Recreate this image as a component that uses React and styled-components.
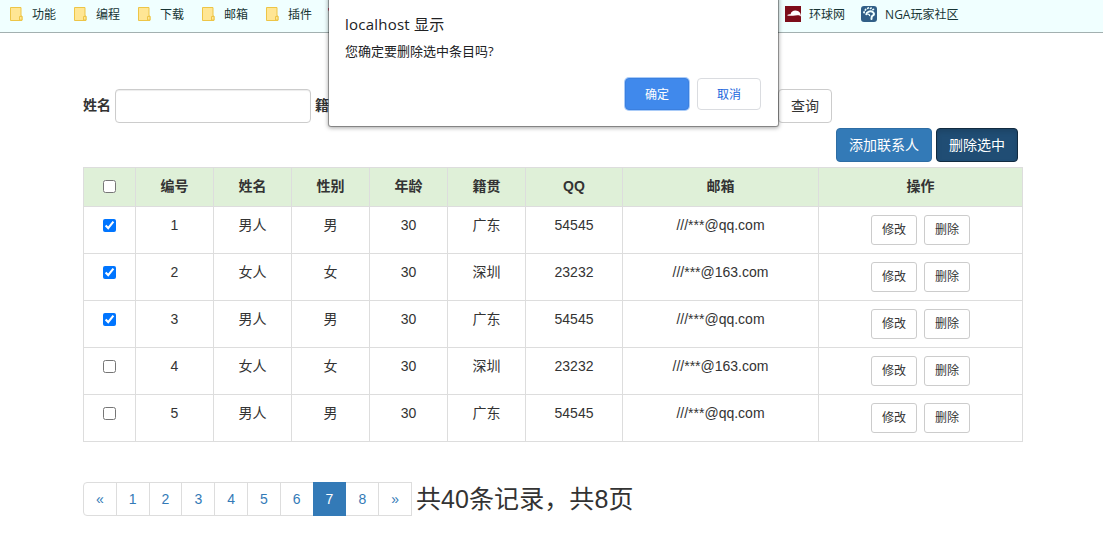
import React, { useState } from "react";
import styled, { createGlobalStyle, css } from "styled-components";

const GlobalStyle = createGlobalStyle`
  * { box-sizing: border-box; }
  body {
    margin: 0;
    background: #fff;
    color: #333;
    font: 14px/20px "Liberation Sans", "Noto Sans CJK SC", sans-serif;
    overflow: hidden;
  }
  button, input { font-family: inherit; }
`;

const Page = styled.div`
  position: relative;
  height: 540px;
`;

const BookmarkBar = styled.nav`
  display: flex;
  align-items: flex-start;
  gap: 16px;
  height: 33px;
  padding: 6px 8px 0;
  background: #f0ffff;
  border-bottom: 1px solid #a3b0b0;
`;

const Bookmark = styled.a`
  display: flex;
  align-items: flex-start;
  gap: 8px;
  height: 18px;
  color: #173434;
  font: 12px/18px "Open Sans", "Noto Sans CJK SC", sans-serif;
  white-space: nowrap;
  svg { display: block; flex: none; }
`;

const SiteBookmarks = styled.div`
  display: flex;
  gap: 16px;
  margin-left: 425px;
`;

const Container = styled.main`
  width: 940px;
  margin: 56px 0 0 83px;
`;

const SearchForm = styled.form`
  display: flex;
  align-items: center;
  gap: 4px;
  height: 34px;
`;

const Label = styled.label`
  font-weight: 700;
  line-height: 20px;
  margin-top: -2px;
  white-space: nowrap;
`;

const TextInput = styled.input`
  width: 196px;
  height: 34px;
  padding: 6px 12px;
  border: 1px solid #ccc;
  border-radius: 4px;
  box-shadow: inset 0 1px 1px rgba(0, 0, 0, 0.075);
`;

const Button = styled.button`
  height: 34px;
  padding: 6px 12px;
  border: 1px solid #ccc;
  border-radius: 4px;
  background: #fff;
  color: #333;
  font-size: 14px;
  line-height: 20px;
  white-space: nowrap;
  ${(p) => p.$kind === "primary" && css`
    color: #fff;
    background: #337ab7;
    border-color: #2e6da4;
  `}
  ${(p) => p.$kind === "pressed" && css`
    color: #fff;
    background: #204d74;
    border-color: #122b40;
    box-shadow: inset 0 3px 5px rgba(0, 0, 0, 0.125);
  `}
  ${(p) => p.$small && css`
    height: 30px;
    padding: 5px 10px;
    border-radius: 3px;
    font-size: 12px;
    line-height: 18px;
  `}
`;

const QueryButton = styled(Button)`
  margin-left: auto;
  margin-right: 191px;
`;

const Toolbar = styled.div`
  display: flex;
  justify-content: flex-end;
  gap: 4px;
  padding: 5px 5px;
`;

const Table = styled.table`
  width: 940px;
  table-layout: fixed;
  border-collapse: collapse;
  text-align: center;
`;

const HeadRow = styled.tr`
  height: 39px;
  background: #dff0d8;
`;

const Row = styled.tr`
  height: 47px;
`;

const cell = css`
  padding: 8px 0 0;
  border: 1px solid #ddd;
  vertical-align: top;
  line-height: 20px;
`;
const Th = styled.th`${cell}`;
const Td = styled.td`${cell}`;

const Check = styled.input.attrs({ type: "checkbox" })`
  display: block;
  width: 13px;
  height: 13px;
  margin: 4px auto 0;
`;

const Actions = styled.div`
  display: flex;
  justify-content: center;
  gap: 7px;
`;

const Footer = styled.div`
  display: flex;
  align-items: center;
  gap: 4px;
  margin-top: 40px;
`;

const Pagination = styled.ul`
  display: flex;
  margin: 0;
  padding: 0;
  list-style: none;
`;

const PageLink = styled.li`
  height: 34px;
  margin-left: -1px;
  padding: 6px 12px;
  border: 1px solid ${(p) => (p.$active ? "#337ab7" : "#ddd")};
  background: ${(p) => (p.$active ? "#337ab7" : "#fff")};
  color: ${(p) => (p.$active ? "#fff" : "#337ab7")};
  position: relative;
  z-index: ${(p) => (p.$active ? 1 : 0)};
  &:first-child {
    margin-left: 0;
    border-radius: 4px 0 0 4px;
  }
`;

const Summary = styled.span`
  font-size: 25px;
  line-height: 34px;
  letter-spacing: 0.08px;
  white-space: nowrap;
`;

const Dialog = styled.section`
  position: absolute;
  z-index: 5;
  top: -4px;
  left: 329px;
  width: 449px;
  height: 130px;
  padding: 18px 17px 16px 16px;
  display: flex;
  flex-direction: column;
  background: #fff;
  border-radius: 2px;
  box-shadow: 0 0 0 1px rgba(0, 0, 0, 0.3), 0 1px 4px 1px rgba(0, 0, 0, 0.35);
  color: #202124;
  font-family: "Open Sans", "Noto Sans CJK SC", sans-serif;
`;

const DialogTitle = styled.h1`
  margin: 0;
  font-size: 15px;
  font-weight: 400;
  line-height: 20px;
  letter-spacing: 0.22px;
`;

const DialogText = styled.p`
  margin: 8px 0 0;
  font-size: 13px;
  line-height: 18px;
`;

const DialogActions = styled.div`
  display: flex;
  justify-content: flex-end;
  gap: 8px;
  margin-top: auto;
`;

const DialogButton = styled.button`
  width: 64px;
  height: 32px;
  padding: 0;
  border: 1px solid ${(p) => (p.$primary ? "#3b80e0" : "#dadce0")};
  border-radius: 4px;
  background: ${(p) => (p.$primary ? "#4089ec" : "#fff")};
  color: ${(p) => (p.$primary ? "#fff" : "#1a66dc")};
  box-shadow: ${(p) => (p.$primary ? "0 0 0 1px #a9cbf8" : "none")};
  font-size: 12px;
`;

const FolderIcon = () => (
  <svg width="16" height="16" viewBox="0 0 16 16">
    <path d="M2.5 1.5h10.5v8.5h1v4.5h-11.5z" fill="#ffe694" stroke="#edc547" />
    <path d="M11.500 14V10.500h2.500v3.500z" fill="#ffe694" stroke="#edc547" />
  </svg>
);

const HeartIcon = () => (
  <svg width="16" height="16" viewBox="0 0 16 16">
    <path d="M0 2h16v2L8 14 0 4z" fill="#e9698b" />
  </svg>
);

const GlobeNewsIcon = () => (
  <svg width="16" height="16" viewBox="0 0 16 16">
    <path d="M0 0h16v16H0z" fill="#7d0d1a" />
    <path d="M2 9.300c1-.8 2.200-.9 3.500-1 .7-2.600 2.400-3.800 4.800-3.800 2.300 0 4.100 1 5.200 3.300l.5 2.800c-1-1.100-2.300-1.600-3.700-1.400-1.700.3-3.600.7-5.200.5-1.900.3-3.700.2-5.100-.4z" fill="#fff" />
  </svg>
);

const PawIcon = () => (
  <svg width="16" height="16" viewBox="0 0 16 16">
    <rect width="16" height="16" rx="3" fill="#315f87" />
    <g fill="#f0ffff">
      <ellipse cx="3.100" cy="6.200" rx=".9" ry="1.200" />
      <ellipse cx="4.500" cy="3.700" rx=".9" ry="1.200" transform="rotate(30 4.500 3.700)" />
      <ellipse cx="7" cy="2.100" rx=".9" ry="1.300" transform="rotate(50 7 2.100)" />
      <ellipse cx="9.800" cy="2.200" rx=".8" ry="1.300" transform="rotate(60 9.800 2.200)" />
      <ellipse cx="12.200" cy="3.500" rx=".8" ry="1.200" transform="rotate(65 12.200 3.500)" />
    </g>
    <path
      d="M5.300 8.200C5.400 6 9.500 4.300 12 6.200c1.700 1.400 1 2.700-.4 3.500-1.300.8-1 2.100-1.100 3.300"
      fill="none"
      stroke="#f0ffff"
      strokeWidth="2"
      strokeLinecap="round"
    />
    <path d="M6.300 8.300c1.500-.4 2.500.3 2.300 1.800" fill="none" stroke="#f0ffff" strokeWidth="1.300" />
  </svg>
);

const folders = ["功能", "编程", "下载", "邮箱", "插件"];
const widths = [52, 78, 78, 78, 78, 78, 97, 196, 204];
const headings = ["编号", "姓名", "性别", "年龄", "籍贯", "QQ", "邮箱", "操作"];
const contacts = [
  [1, "男人", "男", 30, "广东", "54545", "///***@qq.com"],
  [2, "女人", "女", 30, "深圳", "23232", "///***@163.com"],
  [3, "男人", "男", 30, "广东", "54545", "///***@qq.com"],
  [4, "女人", "女", 30, "深圳", "23232", "///***@163.com"],
  [5, "男人", "男", 30, "广东", "54545", "///***@qq.com"],
];
const pages = ["«", "1", "2", "3", "4", "5", "6", "7", "8", "»"];

export default function App() {
  const [selected, setSelected] = useState([1, 2, 3]);
  const toggle = (id) =>
    setSelected((s) => (s.includes(id) ? s.filter((x) => x !== id) : [...s, id]));
  const all = selected.length === contacts.length;

  return (
    <Page>
      <GlobalStyle />
      <BookmarkBar>
        {folders.map((name) => (
          <Bookmark key={name}><FolderIcon />{name}</Bookmark>
        ))}
        <Bookmark><HeartIcon /></Bookmark>
        <SiteBookmarks>
          <Bookmark><GlobeNewsIcon />环球网</Bookmark>
          <Bookmark><PawIcon />NGA玩家社区</Bookmark>
        </SiteBookmarks>
      </BookmarkBar>

      <Container>
        <SearchForm>
          <Label htmlFor="name">姓名</Label>
          <TextInput id="name" />
          <Label>籍贯</Label>
          <QueryButton type="button">查询</QueryButton>
        </SearchForm>
        <Toolbar>
          <Button $kind="primary">添加联系人</Button>
          <Button $kind="pressed">删除选中</Button>
        </Toolbar>

        <Table>
          <colgroup>
            {widths.map((w, i) => <col key={i} width={w} />)}
          </colgroup>
          <thead>
            <HeadRow>
              <Th>
                <Check
                  checked={all}
                  onChange={() => setSelected(all ? [] : contacts.map((c) => c[0]))}
                />
              </Th>
              {headings.map((h) => <Th key={h}>{h}</Th>)}
            </HeadRow>
          </thead>
          <tbody>
            {contacts.map((c) => (
              <Row key={c[0]}>
                <Td><Check checked={selected.includes(c[0])} onChange={() => toggle(c[0])} /></Td>
                {c.map((value, i) => <Td key={i}>{value}</Td>)}
                <Td>
                  <Actions>
                    <Button $small>修改</Button>
                    <Button $small>删除</Button>
                  </Actions>
                </Td>
              </Row>
            ))}
          </tbody>
        </Table>

        <Footer>
          <Pagination>
            {pages.map((p) => <PageLink key={p} $active={p === "7"}>{p}</PageLink>)}
          </Pagination>
          <Summary>共40条记录，共8页</Summary>
        </Footer>
      </Container>

      <Dialog role="dialog">
        <DialogTitle>localhost 显示</DialogTitle>
        <DialogText>您确定要删除选中条目吗?</DialogText>
        <DialogActions>
          <DialogButton $primary>确定</DialogButton>
          <DialogButton>取消</DialogButton>
        </DialogActions>
      </Dialog>
    </Page>
  );
}
